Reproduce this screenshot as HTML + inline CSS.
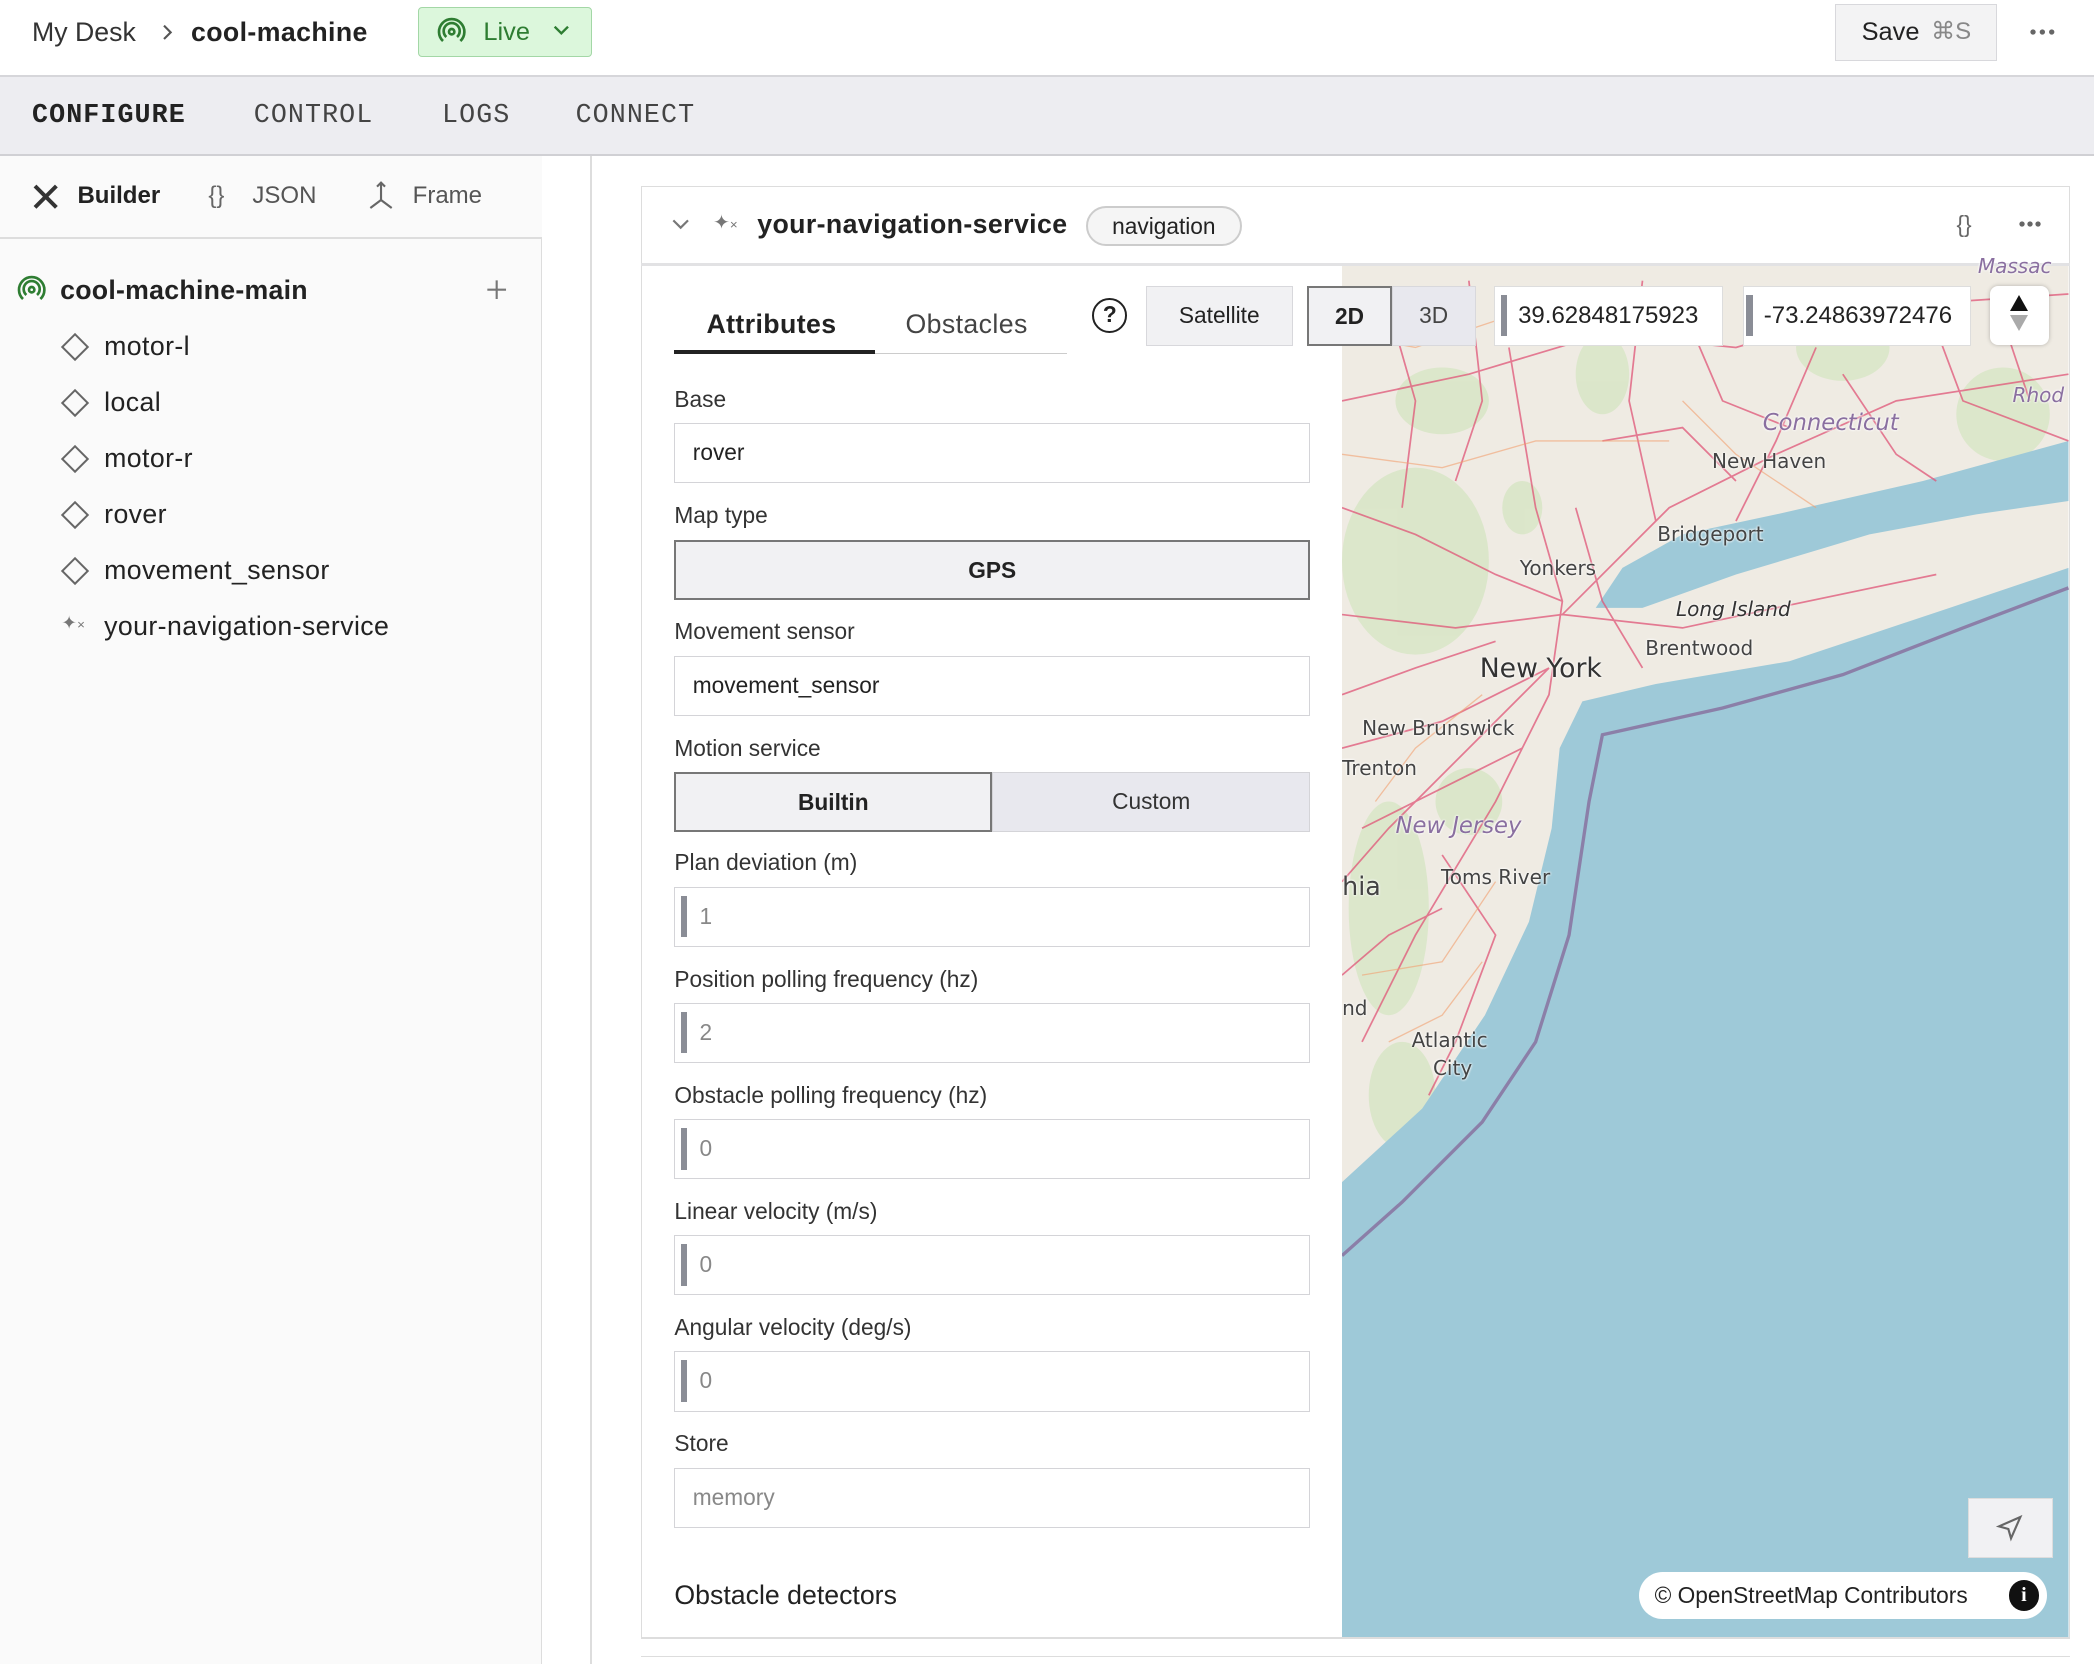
<!DOCTYPE html>
<html><head><meta charset="utf-8"><style>
*{box-sizing:border-box;margin:0;padding:0}
html,body{width:2094px;height:1664px;overflow:hidden;background:#fff;font-family:"Liberation Sans",sans-serif;color:#222}
#w{zoom:1.33546;width:1568px;height:1246px;position:relative;overflow:hidden}
.a{position:absolute;white-space:nowrap}
.t{font-size:19px;line-height:24px}
.mono{font-family:"Liberation Mono",monospace;font-size:20px;letter-spacing:.8px}
.lbl{position:absolute;left:505px;font-size:17px;color:#333}
.inp{position:absolute;left:505px;width:476px;height:45px;border:1px solid #d4d4d8;background:#fff;font-size:17px;padding-left:13px;line-height:43px}
.inp.n{padding-left:18px;color:#888}
.inp.n:before{content:"";position:absolute;left:4px;top:6px;width:5px;height:31px;background:#8a8d96}
.mlab{position:absolute;font-size:15px;color:#444;font-family:"DejaVu Sans",sans-serif;text-shadow:0 0 2px #fff,0 0 2px #fff}
</style></head><body><div id="w">
<!-- top bar -->
<div class="a" style="left:0;top:0;width:1568px;height:58px;border-bottom:2px solid #d6d6da"></div>
<div class="a t" style="left:24px;top:12px;font-size:20px;color:#333">My Desk</div>
<svg class="a" style="left:120px;top:17px" width="10" height="14" viewBox="0 0 10 14" fill="none" stroke="#555" stroke-width="1.6"><path d="M3 2l5 5-5 5"/></svg>
<div class="a t" style="left:143px;top:12px;font-size:20px;font-weight:bold;letter-spacing:.3px">cool-machine</div>
<div class="a" style="left:313px;top:5px;width:130px;height:38px;background:#dcf7dc;border:1px solid #a3d7a6;border-radius:3px"></div>
<svg class="a" style="left:327px;top:13px" width="22" height="22" viewBox="0 0 22 22" fill="none" stroke="#2e7d32" stroke-width="2"><circle cx="11" cy="11" r="2"/><path d="M7 15a6 6 0 1 1 8 0"/><path d="M4.5 18a9.5 9.5 0 1 1 13 0"/></svg>
<div class="a t" style="left:362px;top:12px;font-size:19px;color:#2e7d32">Live</div>
<svg class="a" style="left:413px;top:18px" width="14" height="10" viewBox="0 0 14 10" fill="none" stroke="#2e7d32" stroke-width="1.8"><path d="M2 2l5 5 5-5"/></svg>
<div class="a" style="left:1374px;top:3px;width:121px;height:43px;background:#f3f3f4;border:1px solid #d8d8dc"></div>
<div class="a t" style="left:1394px;top:12px;font-size:19px">Save</div>
<div class="a t" style="left:1446px;top:12px;font-size:18px;color:#888">⌘S</div>
<svg class="a" style="left:1519px;top:21px" width="20" height="6"><circle cx="3" cy="3" r="2" fill="#666"/><circle cx="10" cy="3" r="2" fill="#666"/><circle cx="17" cy="3" r="2" fill="#666"/></svg>
<!-- nav -->
<div class="a" style="left:0;top:58px;width:1568px;height:59px;background:#ededf1;border-bottom:2px solid #d0d0d4"></div>
<div class="a mono" style="left:24px;top:76px;font-weight:bold;color:#222">CONFIGURE</div>
<div class="a mono" style="left:190px;top:76px;color:#444">CONTROL</div>
<div class="a mono" style="left:331px;top:76px;color:#444">LOGS</div>
<div class="a mono" style="left:431px;top:76px;color:#444">CONNECT</div>
<!-- sidebar -->
<div class="a" style="left:0;top:117px;width:406px;height:1129px;background:#fafafa;border-right:1px solid #ddd"></div>
<div class="a" style="left:0;top:117px;width:406px;height:62px;background:#fafafa;border-bottom:2px solid #ddd"></div>
<div class="a" style="left:442px;top:117px;width:1px;height:1129px;background:#ddd"></div>
<svg class="a" style="left:23px;top:136px" width="22" height="22" viewBox="0 0 22 22" fill="none" stroke="#333" stroke-width="3"><path d="M3 3l16 16M19 3L3 19"/></svg>
<div class="a t" style="left:58px;top:135px;font-size:18px;font-weight:bold">Builder</div>
<div class="a t" style="left:156px;top:135px;font-size:18px;color:#666">{}</div>
<div class="a t" style="left:189px;top:135px;font-size:18px;color:#555">JSON</div>
<svg class="a" style="left:273px;top:135px" width="24" height="24" viewBox="0 0 24 24" fill="none" stroke="#666" stroke-width="1.6"><path d="M12 2v13M9 5l3-3 3 3M12 15l-8 6M12 15l8 6"/></svg>
<div class="a t" style="left:309px;top:135px;font-size:18px;color:#555">Frame</div>
<svg class="a" style="left:13px;top:206px" width="22" height="22" viewBox="0 0 22 22" fill="none" stroke="#2e7d32" stroke-width="2"><circle cx="11" cy="11" r="2"/><path d="M7 15a6 6 0 1 1 8 0"/><path d="M4.5 18a9.5 9.5 0 1 1 13 0"/></svg>
<div class="a t" style="left:45px;top:205px;font-size:20px;font-weight:bold;letter-spacing:.2px">cool-machine-main</div>
<svg class="a" style="left:364px;top:209px" width="16" height="16" fill="none" stroke="#777" stroke-width="1.6"><path d="M8 1v14M1 8h14"/></svg>
<div class="a" style="left:49px;top:252px;width:15px;height:15px;border:1.5px solid #666;transform:rotate(45deg)"></div>
<div class="a t" style="left:78px;top:247px;font-size:20px;letter-spacing:.3px">motor-l</div>
<div class="a" style="left:49px;top:294px;width:15px;height:15px;border:1.5px solid #666;transform:rotate(45deg)"></div>
<div class="a t" style="left:78px;top:289px;font-size:20px;letter-spacing:.3px">local</div>
<div class="a" style="left:49px;top:336px;width:15px;height:15px;border:1.5px solid #666;transform:rotate(45deg)"></div>
<div class="a t" style="left:78px;top:331px;font-size:20px;letter-spacing:.3px">motor-r</div>
<div class="a" style="left:49px;top:378px;width:15px;height:15px;border:1.5px solid #666;transform:rotate(45deg)"></div>
<div class="a t" style="left:78px;top:373px;font-size:20px;letter-spacing:.3px">rover</div>
<div class="a" style="left:49px;top:420px;width:15px;height:15px;border:1.5px solid #666;transform:rotate(45deg)"></div>
<div class="a t" style="left:78px;top:415px;font-size:20px;letter-spacing:.3px">movement_sensor</div>
<div class="a" style="left:46px;top:458px;font-size:14px;color:#777">✦<span style="font-size:10px">×</span></div>
<div class="a t" style="left:78px;top:457px;font-size:20px;letter-spacing:.3px">your-navigation-service</div>
<!-- card -->
<div class="a" style="left:480px;top:139px;width:1070px;height:1088px;border:1px solid #ddd;border-bottom:2px solid #ddd"></div>
<div class="a" style="left:480px;top:197px;width:1070px;height:2px;background:#e2e2e4"></div>
<div class="a" style="left:480px;top:1240px;width:1070px;height:1px;background:#ddd"></div>
<svg class="a" style="left:503px;top:164px" width="13" height="9" fill="none" stroke="#777" stroke-width="1.6"><path d="M1 1l5.5 5.5L12 1"/></svg>
<div class="a" style="left:534px;top:157px;font-size:15px;color:#777">✦<span style="font-size:10px">×</span></div>
<div class="a t" style="left:567px;top:156px;font-size:20px;font-weight:bold;letter-spacing:.3px">your-navigation-service</div>
<div class="a" style="left:813px;top:154px;width:117px;height:30px;border:1.5px solid #ccc;border-radius:15px;background:#f5f5f5;font-size:17px;line-height:27px;text-align:center">navigation</div>
<div class="a t" style="left:1465px;top:156px;font-size:17px;color:#666">{}</div>
<svg class="a" style="left:1511px;top:165px" width="18" height="6"><circle cx="3" cy="3" r="2" fill="#666"/><circle cx="9" cy="3" r="2" fill="#666"/><circle cx="15" cy="3" r="2" fill="#666"/></svg>
<!-- map -->
<svg class="a" style="left:1005px;top:199px" width="544" height="1027" viewBox="1005 199 544 1027">
<rect x="1005" y="199" width="544" height="1027" fill="#efebe3"/>
<g fill="#cfe4bb" opacity=".6">
<ellipse cx="1060" cy="420" rx="55" ry="70"/><ellipse cx="1080" cy="300" rx="35" ry="25"/><ellipse cx="1040" cy="680" rx="30" ry="80"/><ellipse cx="1050" cy="820" rx="25" ry="40"/><ellipse cx="1100" cy="600" rx="25" ry="25"/><ellipse cx="1380" cy="260" rx="35" ry="25"/><ellipse cx="1500" cy="310" rx="35" ry="35"/><ellipse cx="1200" cy="280" rx="20" ry="30"/><ellipse cx="1140" cy="380" rx="15" ry="20"/>
</g>
<path fill="#9ec9d8" d="M1549 425L1460 455L1340 495L1240 512L1185 525L1168 560L1162 620L1145 690L1112 760L1065 830L1005 885L1005 1226L1549 1226Z"/>
<path fill="#9ec9d8" d="M1549 330L1440 360L1330 385L1260 400L1215 425L1195 455L1230 455L1300 430L1400 400L1480 385L1549 375Z"/>
<path fill="none" stroke="#8b7fa8" stroke-width="2.5" d="M1549 440L1470 470L1380 505L1290 530L1200 550L1190 600L1175 700L1150 780L1110 840L1050 900L1005 940"/>
<g fill="none" stroke="#e05577" stroke-width="1.3" opacity=".75">
<path d="M1005 300L1100 280L1200 250L1300 260L1400 230L1549 220"/><path d="M1130 260L1150 380L1170 450L1160 520L1120 600L1060 700L1020 780"/><path d="M1005 460L1090 470L1170 460L1260 470L1330 455L1450 430"/><path d="M1170 460L1250 380L1330 340L1420 300L1549 280"/><path d="M1005 560L1080 540L1160 500"/><path d="M1160 500L1100 560L1040 620L1005 660"/><path d="M1230 210L1220 300L1240 390"/><path d="M1360 260L1330 330L1300 390"/><path d="M1080 640L1120 700L1090 780L1070 820"/><path d="M1005 380L1060 400L1120 430L1170 450"/><path d="M1440 220L1470 300L1549 330"/>
<path d="M1040 230L1060 300L1050 380"/><path d="M1100 210L1110 300L1090 360"/><path d="M1180 380L1200 450L1230 500"/><path d="M1005 520L1060 500L1120 480"/><path d="M1260 230L1290 300L1340 320"/><path d="M1380 280L1420 340L1450 360"/><path d="M1005 730L1040 700L1080 680"/><path d="M1020 620L1060 600L1100 580L1140 560"/><path d="M1500 240L1520 300"/><path d="M1200 330L1260 320L1300 360"/>
</g>
<g fill="none" stroke="#f2a070" stroke-width="1" opacity=".6">
<path d="M1005 340L1080 350L1150 330L1250 330"/><path d="M1030 600L1060 560L1110 520"/><path d="M1020 730L1080 720L1120 660"/><path d="M1260 300L1300 340L1360 380"/><path d="M1005 250L1060 260L1120 240"/><path d="M1040 780L1080 760L1110 720"/>
</g>
</svg>
<div class="mlab" style="left:1481px;top:190px;color:#8a6fa0;font-style:italic">Massac</div>
<div class="mlab" style="left:1507px;top:287px;color:#8a6fa0;font-style:italic">Rhod</div>
<div class="mlab" style="left:1320px;top:307px;color:#8a6fa0;font-style:italic;font-size:17px">Connecticut</div>
<div class="mlab" style="left:1282px;top:336px">New Haven</div>
<div class="mlab" style="left:1241px;top:391px">Bridgeport</div>
<div class="mlab" style="left:1138px;top:416px">Yonkers</div>
<div class="mlab" style="left:1255px;top:447px;font-style:italic;color:#333">Long Island</div>
<div class="mlab" style="left:1232px;top:476px">Brentwood</div>
<div class="mlab" style="left:1108px;top:489px;font-size:20px;color:#333">New York</div>
<div class="mlab" style="left:1020px;top:536px">New Brunswick</div>
<div class="mlab" style="left:1005px;top:566px">Trenton</div>
<div class="mlab" style="left:1045px;top:609px;color:#8a6fa0;font-style:italic;font-size:17px">New Jersey</div>
<div class="mlab" style="left:1079px;top:648px">Toms River</div>
<div class="mlab" style="left:1005px;top:652px;font-size:19px">hia</div>
<div class="mlab" style="left:1005px;top:746px">nd</div>
<div class="mlab" style="left:1057px;top:770px">Atlantic</div>
<div class="mlab" style="left:1073px;top:791px">City</div>
<!-- map controls -->
<div class="a" style="left:818px;top:223px;width:26px;height:26px;border:2px solid #222;border-radius:50%;font-size:17px;font-weight:bold;text-align:center;line-height:22px">?</div>
<div class="a" style="left:858px;top:214px;width:110px;height:45px;background:#f1f1f3;border:1px solid #d8d8dc;font-size:17px;text-align:center;line-height:43px">Satellite</div>
<div class="a" style="left:979px;top:214px;width:63px;height:45px;background:#f1f1f3;border:1.5px solid #777;font-size:17px;font-weight:bold;text-align:center;line-height:42px">2D</div>
<div class="a" style="left:1042px;top:214px;width:63px;height:45px;background:#e8e8ee;border:1px solid #d8d8dc;font-size:17px;text-align:center;line-height:43px;color:#444">3D</div>
<div class="a" style="left:1119px;top:214px;width:171px;height:45px;background:#fff;border:1px solid #ddd;overflow:hidden;font-size:18px;line-height:43px;padding-left:17px">39.62848175923<div class="a" style="left:4px;top:6px;width:5px;height:31px;background:#8a8d96"></div></div>
<div class="a" style="left:1305px;top:214px;width:171px;height:45px;background:#fff;border:1px solid #ddd;overflow:hidden;font-size:18px;line-height:43px;padding-left:15px">-73.24863972476<div class="a" style="left:2px;top:6px;width:5px;height:31px;background:#8a8d96"></div></div>
<div class="a" style="left:1490px;top:214px;width:44px;height:44px;background:#fff;border-radius:6px;box-shadow:0 0 3px rgba(0,0,0,.25)"></div>
<div class="a" style="left:1505px;top:221px;width:0;height:0;border-left:7px solid transparent;border-right:7px solid transparent;border-bottom:12px solid #111"></div>
<div class="a" style="left:1505px;top:236px;width:0;height:0;border-left:7px solid transparent;border-right:7px solid transparent;border-top:12px solid #aaa"></div>
<div class="a" style="left:1474px;top:1122px;width:63px;height:45px;background:#f1f1f3;border:1px solid #ddd"></div>
<svg class="a" style="left:1494px;top:1133px" width="22" height="22" viewBox="0 0 22 22" fill="none" stroke="#666" stroke-width="1.6"><path d="M19 3L3 10l7 2 2 7z"/></svg>
<div class="a" style="left:1227px;top:1177px;width:306px;height:35px;background:#fff;border-radius:18px;font-size:17px;line-height:35px;padding-left:12px">© OpenStreetMap Contributors</div>
<div class="a" style="left:1504px;top:1183px;width:23px;height:23px;background:#111;border-radius:50%;color:#fff;font-weight:bold;font-size:15px;text-align:center;line-height:23px;font-family:'Liberation Serif',serif">i</div>
<!-- tabs -->
<div class="a t" style="left:529px;top:231px;font-size:20px;font-weight:bold;letter-spacing:.3px">Attributes</div>
<div class="a t" style="left:678px;top:231px;font-size:20px;color:#444;letter-spacing:.3px">Obstacles</div>
<div class="a" style="left:505px;top:264px;width:294px;height:1px;background:#ccc"></div>
<div class="a" style="left:505px;top:262px;width:150px;height:3px;background:#222"></div>
<!-- form -->
<div class="lbl" style="top:289px">Base</div>
<div class="inp" style="top:317px">rover</div>
<div class="lbl" style="top:376px">Map type</div>
<div class="inp" style="top:404px;background:#f1f1f3;border:1.5px solid #777;text-align:center;font-weight:bold;padding:0">GPS</div>
<div class="lbl" style="top:463px">Movement sensor</div>
<div class="inp" style="top:491px">movement_sensor</div>
<div class="lbl" style="top:550px">Motion service</div>
<div class="inp" style="top:578px;width:238px;background:#f1f1f3;border:1.5px solid #777;text-align:center;font-weight:bold;padding:0">Builtin</div>
<div class="inp" style="top:578px;left:743px;width:238px;background:#e8e8ee;text-align:center;padding:0;color:#333">Custom</div>
<div class="lbl" style="top:636px">Plan deviation (m)</div>
<div class="inp n" style="top:664px">1</div>
<div class="lbl" style="top:723px">Position polling frequency (hz)</div>
<div class="inp n" style="top:751px">2</div>
<div class="lbl" style="top:810px">Obstacle polling frequency (hz)</div>
<div class="inp n" style="top:838px">0</div>
<div class="lbl" style="top:897px">Linear velocity (m/s)</div>
<div class="inp n" style="top:925px">0</div>
<div class="lbl" style="top:984px">Angular velocity (deg/s)</div>
<div class="inp n" style="top:1012px">0</div>
<div class="lbl" style="top:1071px">Store</div>
<div class="inp" style="top:1099px;color:#888">memory</div>
<div class="a t" style="left:505px;top:1182px;font-size:20px">Obstacle detectors</div>
</div></body></html>
